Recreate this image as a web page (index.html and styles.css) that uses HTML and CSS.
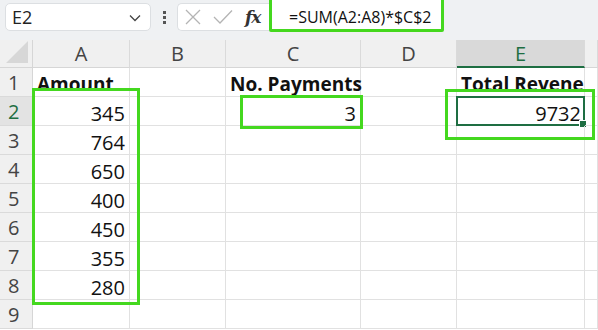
FILE: index.html
```html
<!DOCTYPE html>
<html>
<head>
  <meta charset="UTF-8">
  <title>Revenue sheet</title>
  <link rel="stylesheet" href="styles.css">
</head>
<body>
  <div class="app">
    <!-- Formula bar -->
    <div class="toolbar">
      <div class="name-box">
        <span>E2</span>
        <svg class="chevron" width="12" height="8" viewBox="0 0 12 8"><path d="M1 1.5 L6 6.5 L11 1.5" fill="none" stroke="#444" stroke-width="1.3"/></svg>
      </div>
      <div class="dots"><i></i><i></i><i></i></div>
      <div class="fx-box">
        <svg width="16" height="16" viewBox="0 0 16 16"><path d="M1 1 L15 15 M15 1 L1 15" stroke="#b4b4b4" stroke-width="1.3"/></svg>
        <svg width="20" height="16" viewBox="0 0 20 16"><path d="M1 8 L7 14 L19 1.5" fill="none" stroke="#b4b4b4" stroke-width="1.3"/></svg>
        <span class="fx">fx</span>
      </div>
      <div class="formula">=SUM(A2:A8)*$C$2</div>
    </div>

    <!-- Sheet grid -->
    <div class="sheet">
      <div class="grid">
        <div class="corner"></div>
        <div class="col-head">A</div>
        <div class="col-head">B</div>
        <div class="col-head">C</div>
        <div class="col-head">D</div>
        <div class="col-head active">E</div>
        <div class="col-head"></div>

        <div class="row-head">1</div>
        <div class="cell bold">Amount</div>
        <div class="cell"></div>
        <div class="cell bold">No. Payments</div>
        <div class="cell"></div>
        <div class="cell bold">Total Revene</div>
        <div class="cell"></div>

        <div class="row-head active">2</div>
        <div class="cell num">345</div>
        <div class="cell"></div>
        <div class="cell num">3</div>
        <div class="cell"></div>
        <div class="cell num selected">9732<span class="handle"></span></div>
        <div class="cell"></div>

        <div class="row-head">3</div>
        <div class="cell num">764</div>
        <div class="cell"></div><div class="cell"></div><div class="cell"></div><div class="cell"></div><div class="cell"></div>

        <div class="row-head">4</div>
        <div class="cell num">650</div>
        <div class="cell"></div><div class="cell"></div><div class="cell"></div><div class="cell"></div><div class="cell"></div>

        <div class="row-head">5</div>
        <div class="cell num">400</div>
        <div class="cell"></div><div class="cell"></div><div class="cell"></div><div class="cell"></div><div class="cell"></div>

        <div class="row-head">6</div>
        <div class="cell num">450</div>
        <div class="cell"></div><div class="cell"></div><div class="cell"></div><div class="cell"></div><div class="cell"></div>

        <div class="row-head">7</div>
        <div class="cell num">355</div>
        <div class="cell"></div><div class="cell"></div><div class="cell"></div><div class="cell"></div><div class="cell"></div>

        <div class="row-head">8</div>
        <div class="cell num">280</div>
        <div class="cell"></div><div class="cell"></div><div class="cell"></div><div class="cell"></div><div class="cell"></div>

        <div class="row-head">9</div>
        <div class="cell"></div><div class="cell"></div><div class="cell"></div><div class="cell"></div><div class="cell"></div><div class="cell"></div>
      </div>

      <!-- Green highlight annotations -->
      <div class="mark mark-a"></div>
      <div class="mark mark-c"></div>
      <div class="mark mark-e"></div>
    </div>
  </div>
</body>
</html>
```

FILE: styles.css
```css
/* Base */
body {
  margin: 0;
  font-family: "Open Sans", "Noto Sans", sans-serif;
  background: #fff;
  color: #111;
  overflow: hidden;
}
.app {
  width: 598px;
  height: 330px;
  overflow: hidden;
}

/* Formula bar */
.toolbar {
  position: relative;
  height: 40px;
  background: #eff1f3;
  box-sizing: border-box;
  padding: 3px 0 0 5px;
  display: flex;
  align-items: flex-start;
}
.name-box {
  width: 146px;
  height: 28px;
  box-sizing: border-box;
  background: #fff;
  border: 1px solid #dcdfe2;
  border-radius: 5px;
  display: flex;
  align-items: center;
  justify-content: space-between;
  padding: 0 9px 0 6px;
  font-size: 18px;
  color: #222;
}
.chevron {
  margin-top: 2px;
}
.dots {
  width: 26px;
  height: 28px;
  display: flex;
  flex-direction: column;
  align-items: center;
  justify-content: center;
  gap: 2px;
}
.dots i {
  width: 3px;
  height: 3px;
  background: #555;
}
.fx-box {
  width: 92px;
  height: 28px;
  box-sizing: border-box;
  background: #fff;
  border: 1px solid #dcdfe2;
  border-right: none;
  border-radius: 5px 0 0 5px;
  display: flex;
  align-items: center;
  gap: 12px;
  padding-left: 7px;
}
.fx {
  font-family: "DejaVu Serif", "Liberation Serif", serif;
  font-style: italic;
  font-weight: bold;
  font-size: 17px;
  color: #333;
  letter-spacing: -1px;
}
.formula {
  position: absolute;
  left: 269px;
  top: -3px;
  width: 175px;
  height: 35px;
  box-sizing: border-box;
  background: #fff;
  border: 3px solid #44d81f;
  border-radius: 2px;
  padding: 6px 0 0 17px;
  font-size: 16px;
  color: #111;
  white-space: nowrap;
}

/* Grid */
.sheet {
  position: relative;
}
.grid {
  display: grid;
  grid-template-columns: 33px 97px 96px 135px 96px 128px 13px;
  grid-template-rows: 28px repeat(9, 29px);
}
.corner,
.col-head,
.row-head {
  background: #f0f0f0;
  color: #444;
  font-size: 20px;
  box-sizing: border-box;
}
.corner {
  position: relative;
  border-right: 1px solid #d6d6d6;
  border-bottom: 1px solid #d6d6d6;
}
.corner::after {
  content: "";
  position: absolute;
  right: 4px;
  bottom: 4px;
  border-left: 22px solid transparent;
  border-bottom: 22px solid #d7d7d7;
}
.col-head {
  border-right: 1px solid #dadada;
  border-bottom: 1px solid #d6d6d6;
  text-align: center;
  line-height: 27px;
}
.col-head.active {
  background: #d9d9d9;
  color: #1e6e42;
  border-bottom: 2px solid #1e6e42;
}
.row-head {
  border-right: 1px solid #d6d6d6;
  border-bottom: 1px solid #dadada;
  line-height: 29px;
  padding-left: 8px;
}
.row-head.active {
  color: #1e6e42;
  background: #e3e3e3;
}
.cell {
  position: relative;
  border-right: 1px solid #e1e1e1;
  border-bottom: 1px solid #e1e1e1;
  box-sizing: border-box;
  font-size: 20px;
  line-height: 29px;
  padding: 2px 4px 0 4px;
  white-space: nowrap;
  overflow: hidden;
}
.cell.bold {
  font-weight: bold;
  font-size: 19px;
  overflow: visible;
}
.cell.num {
  text-align: right;
}
.cell.selected {
  border: 2px solid #1e6e42;
  margin: -1px 0 0 -1px;
  line-height: 27px;
  padding-right: 2px;
  overflow: visible;
}
.handle {
  position: absolute;
  right: -4px;
  bottom: -4px;
  width: 6px;
  height: 6px;
  background: #1e6e42;
  border: 1px solid #fff;
}

/* Green annotation boxes */
.mark {
  position: absolute;
  border: 3px solid #44d81f;
  box-sizing: border-box;
}
.mark-a {
  left: 32px;
  top: 48px;
  width: 108px;
  height: 217px;
}
.mark-c {
  left: 240px;
  top: 55px;
  width: 123px;
  height: 34px;
}
.mark-e {
  left: 445px;
  top: 49px;
  width: 150px;
  height: 51px;
}
```
